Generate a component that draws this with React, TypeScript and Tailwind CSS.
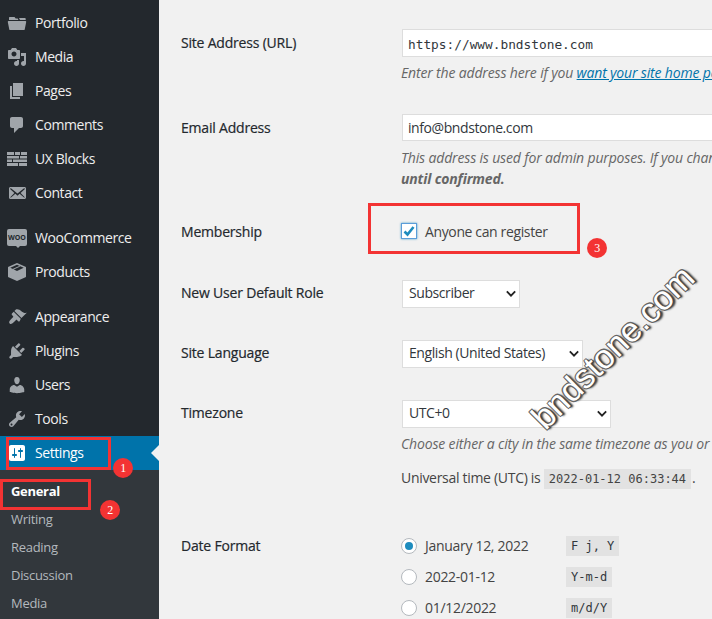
import React from "react";

const P: Record<string, string> = {
  media: "M13 11V4c0-.55-.45-1-1-1h-1.670L9 1H5L3.670 3H2c-.55 0-1 .45-1 1v7c0 .55.45 1 1 1h10c.55 0 1-.45 1-1zM7 4.500c1.380 0 2.500 1.120 2.500 2.500S8.380 9.500 7 9.500 4.500 8.380 4.500 7 5.620 4.500 7 4.500zM14 6h5v10.500c0 1.380-1.120 2.500-2.500 2.500S14 17.880 14 16.500s1.120-2.500 2.500-2.500c.17 0 .34.020.5.050V9h-3V6zm-4 8.050V13h2v3.500c0 1.380-1.120 2.500-2.500 2.500S7 17.880 7 16.500 8.120 14 9.500 14c.17 0 .34.020.5.050z",
  pages: "M6 15V2h10v13H6zm-1 1h8v2H3V5h2v11z",
  comments: "M5 2h9c1.100 0 2 .9 2 2v7c0 1.100-.9 2-2 2h-2l-5 5v-5H5c-1.100 0-2-.9-2-2V4c0-1.100.9-2 2-2z",
  email: "M19 14.500v-9c0-.83-.67-1.500-1.500-1.500H3.490c-.83 0-1.500.67-1.500 1.500v9c0 .83.67 1.500 1.500 1.500H17.500c.83 0 1.500-.67 1.500-1.500zm-1.310-9.110c.33.33.15.67-.03.84L13.590 9.960l3.910 4.070c.12.14.2.36.06.51-.13.16-.43.15-.55.050l-4.380-3.740-2.140 1.950-2.130-1.950-4.380 3.740c-.12.100-.42.110-.55-.050-.14-.15-.06-.37.06-.51l3.910-4.070-4.070-3.730c-.18-.17-.36-.51-.03-.84.33-.33.67-.17.95.070l6.240 5.040 6.250-5.040c.28-.24.62-.4.95-.07z",
  appearance: "M14.480 11.060L7.410 3.990l1.500-1.500c.5-.56 2.300-.47 3.510.32 1.210.8 1.430 1.280 2.910 2.100 1.180.64 2.450 1.260 4.450.85zm-.71.71L6.700 4.700 4.930 6.470c-.39.39-.39 1.020 0 1.410l1.060 1.060c.39.39.39 1.030 0 1.420-.6.600-1.430 1.310-2.210 2.090-1.790 1.800-2.040 3.040-1.100 4 .95.940 2.200.7 3.990-1.100.78-.78 1.480-1.610 2.090-2.200.39-.39 1.020-.39 1.410 0l1.060 1.060c.39.39 1.020.39 1.410 0z",
  plugins: "M13.110 4.360L9.870 7.600 8 5.730l3.240-3.240c.35-.34 1.050-.2 1.560.32.52.51.66 1.210.31 1.550zm-8 1.770l.91-1.120 9.010 9.010-1.190.84c-.71.71-2.630 1.160-3.820 1.160H6.140L4.900 17.260c-.59.59-1.540.59-2.120 0-.59-.58-.59-1.530 0-2.120l1.240-1.240v-3.880c0-1.130.4-3.180 1.090-3.890zm7.260 3.970l3.240-3.240c.34-.35 1.040-.21 1.550.31.52.51.66 1.210.31 1.550l-3.240 3.250z",
  users: "M10 9.250c-2.270 0-2.730-3.440-2.730-3.440C7 4.020 7.820 2 9.970 2c2.160 0 2.980 2.020 2.710 3.810 0 0-.41 3.440-2.680 3.440zm0 2.570L12.720 10c2.390 0 4.520 2.330 4.520 4.530v2.490s-3.650 1.130-7.240 1.130c-3.650 0-7.240-1.130-7.240-1.130v-2.490c0-2.250 1.940-4.480 4.470-4.480z",
  tools: "M16.680 9.770c-1.340 1.340-3.300 1.670-4.950.99l-5.410 6.520c-.99.99-2.590.99-3.580 0s-.99-2.590 0-3.570l6.520-5.420c-.68-1.650-.35-3.610.99-4.950 1.280-1.280 3.120-1.620 4.720-1.060l-2.890 2.890 2.820 2.820 2.860-2.870c.53 1.580.18 3.390-1.080 4.650zM3.810 16.210c.4.390 1.040.39 1.430 0 .4-.4.400-1.040 0-1.430-.39-.4-1.030-.4-1.430 0-.39.39-.39 1.030 0 1.430z",
  settings: "M18 16V4c0-1.100-.9-2-2-2H4c-1.100 0-2 .9-2 2v12c0 1.100.9 2 2 2h12c1.100 0 2-.9 2-2zM8 11h1c.55 0 1 .45 1 1s-.45 1-1 1H8v1.500c0 .28-.22.5-.5.5s-.5-.22-.5-.5V13H6c-.55 0-1-.45-1-1s.45-1 1-1h1V5.500c0-.28.22-.5.5-.5s.5.22.5.5V11zm5-2h-1c-.55 0-1-.45-1-1s.45-1 1-1h1V5.500c0-.28.22-.5.5-.5s.5.22.5.5V7h1c.55 0 1 .45 1 1s-.45 1-1 1h-1v5.500c0 .28-.22.5-.5.5s-.5-.22-.5-.5V9z",
  portfolio: "M2 8h16.500c.5 0 .8.4.7.9l-1.500 7.500c-.1.4-.4.6-.8.6H3.100c-.4 0-.7-.2-.8-.6L.8 8.900C.7 8.400 1 8 1.500 8zM2 7V4.700c0-.4.3-.7.7-.7h4.800l1.200 1.500h2l.8 1.500zM13 7l-1-2h6c.4 0 .7.3.7.7V7z",
  blocks: "M0 3h7v3H0zM8 3h5v3H8zM14 3h6v3h-6zM0 7h12v2.500H0zM13 7h7v2.500h-7zM0 10.500h5V13H0zM6 10.500h14V13H6zM0 14h11v3H0zM12 14h8v3h-8z",
  products: "M10 1l8.500 3.800c.3.100.5.4.5.8v8.800c0 .4-.2.7-.5.8L10 19l-8.500-3.800c-.3-.1-.5-.4-.5-.8V5.600c0-.4.2-.7.5-.8zM10 2.800L3.300 5.700 10 9l6.700-3.300zM12.200 3.900L5.600 7l1.100.5 6.600-3.100z",
};

function Icon({ name, color = "#a0a5aa" }: { name: string; color?: string }) {
  return (
    <svg viewBox="0 0 20 20" className="w-5 h-5 shrink-0" fill={color} fillRule="evenodd">
      <path d={P[name]} />
    </svg>
  );
}

function WooIcon() {
  return (
    <div className="relative w-5 h-[17px] mb-[2px] bg-[#a0a5aa] rounded-[2px] flex items-center justify-center shrink-0">
      <span className="text-[7px] font-bold leading-none tracking-[0px] text-[#23282d]">WOO</span>
      <div className="absolute left-[9px] -bottom-[2px] w-0 h-0 border-x-[2px] border-x-transparent border-t-[2px] border-t-[#a0a5aa]" />
    </div>
  );
}

function Item({ icon, label }: { icon: string; label: string }) {
  return (
    <div className="h-[34px] flex items-center pl-[7px] gap-2 text-[#eeeeee] tracking-[-0.42px]">
      {icon === "woo" ? <WooIcon /> : <Icon name={icon} />}
      <span className="mb-[2px]">{label}</span>
    </div>
  );
}

function Badge({ n, className }: { n: number; className: string }) {
  return (
    <div className={`absolute w-5 h-5 rounded-full bg-[#f33333] text-white text-[12px] leading-5 text-center font-['Liberation_Serif',serif] ${className}`}>
      {n}
    </div>
  );
}

function Select({ w, children }: { w: string; children: string }) {
  return (
    <div className={`relative h-7 ${w}`}>
      <select className="appearance-none w-full h-full bg-white border border-[#dddddd] pl-[6px] pb-[4px] text-[#32373c] text-[14px] tracking-[-0.42px] outline-none">
        <option>{children}</option>
      </select>
      <svg viewBox="0 0 12 8" className="absolute right-[4px] top-[10px] w-[10px] h-[7px]" fill="none" stroke="#222222" strokeWidth="2.200">
        <path d="M1 1.500l5 5 5-5" />
      </svg>
    </div>
  );
}

function Row({ label, mt, pt = "pt-1", children }: { label: string; mt: string; pt?: string; children: React.ReactNode }) {
  return (
    <div className={`flex ${mt}`}>
      <div className={`w-[221px] shrink-0 font-medium text-[#23282d] leading-5 tracking-[-0.2px] [-webkit-text-stroke:0.2px_#23282d] ${pt}`}>{label}</div>
      <div className="w-[500px] shrink-0">{children}</div>
    </div>
  );
}

const mono = "font-['DejaVu_Sans_Mono',monospace]";
const hint = "italic text-[#666666] leading-[21px] whitespace-nowrap -ml-px tracking-[-0.16px]";

function DateOpt({ label, code, checked, mt }: { label: string; code: string; checked?: boolean; mt?: string }) {
  return (
    <div className={`flex items-center h-5 ${mt ?? ""}`}>
      <div className="w-4 h-4 rounded-full bg-white border border-[#b4b9be] flex items-center justify-center shrink-0 -ml-px">
        {checked && <div className="w-2 h-2 rounded-full bg-[#1e8cbe]" />}
      </div>
      <span className="ml-2 w-[141px] text-[#444444] leading-5">{label}</span>
      <code className={`bg-[#e2e2e2] px-[5px] h-5 leading-5 text-[12px] tracking-normal text-[#32373c] ${mono}`}>{code}</code>
    </div>
  );
}

export default function App() {
  return (
    <div className="relative w-[712px] h-[619px] overflow-hidden flex bg-[#f1f1f1] text-[14px] font-['Open_Sans',sans-serif] tracking-[-0.3px]">
      <aside className="w-[159px] shrink-0 bg-[#23282d] flex flex-col pt-[6px]">
        <Item icon="portfolio" label="Portfolio" />
        <Item icon="media" label="Media" />
        <Item icon="pages" label="Pages" />
        <Item icon="comments" label="Comments" />
        <Item icon="blocks" label="UX Blocks" />
        <Item icon="email" label="Contact" />
        <div className="h-[11px]" />
        <Item icon="woo" label="WooCommerce" />
        <Item icon="products" label="Products" />
        <div className="h-[11px]" />
        <Item icon="appearance" label="Appearance" />
        <Item icon="plugins" label="Plugins" />
        <Item icon="users" label="Users" />
        <Item icon="tools" label="Tools" />
        <div className="relative h-[34px] flex items-center pl-[7px] gap-2 bg-[#0073aa] text-white tracking-[-0.42px]">
          <Icon name="settings" color="#ffffff" />
          <span className="mb-[2px]">Settings</span>
          <div className="absolute right-0 top-[9px] w-0 h-0 border-y-[8px] border-y-transparent border-r-[8px] border-r-[#f1f1f1]" />
        </div>
        <div className="flex-1 bg-[#32373c] pt-[7px] text-[13px] text-[#b4b9be]">
          <div className="h-7 leading-7 pl-[11px] font-bold text-white">General</div>
          <div className="h-7 leading-7 pl-[11px]">Writing</div>
          <div className="h-7 leading-7 pl-[11px]">Reading</div>
          <div className="h-7 leading-7 pl-[11px]">Discussion</div>
          <div className="h-7 leading-7 pl-[11px]">Media</div>
        </div>
      </aside>

      <main className="flex-1 min-w-0 pt-[29px] pl-[22px]">
        <Row label="Site Address (URL)" mt="mt-0">
          <div className={`h-7 w-[400px] bg-white border border-[#dddddd] pl-[5px] leading-[29px] text-[12.8px] tracking-normal text-[#32373c] ${mono}`}>
            https://www.bndstone.com
          </div>
          <p className={`${hint} mt-[5px]`}>
            Enter the address here if you <a className="text-[#0073aa] underline">want your site home page to be different</a>
          </p>
        </Row>
        <Row label="Email Address" mt="mt-[31px]">
          <div className="h-[27px] w-[400px] bg-white border border-[#dddddd] pl-[5px] leading-[25px] text-[#32373c] tracking-[-0.42px]">info@bndstone.com</div>
          <p className={`${hint} mt-[6px]`}>
            This address is used for admin purposes. If you change this, we will send you an email
            <br />
            <b>until confirmed.</b>
          </p>
        </Row>
        <Row label="Membership" mt="mt-[32px]" pt="pt-[1px]">
          <div className="flex items-center h-5 -ml-px">
            <div className="w-4 h-4 bg-white border border-[#5b9dd9] flex items-center justify-center shadow-[0_0_2px_rgba(30,140,190,0.8)]">
              <svg viewBox="0 0 14 14" className="w-[14px] h-[14px]" fill="none" stroke="#1e8cbe" strokeWidth="2.600">
                <path d="M2.500 7.500l3 3 6-7.500" />
              </svg>
            </div>
            <span className="ml-2 text-[#444444] tracking-[-0.37px]">Anyone can register</span>
          </div>
        </Row>
        <Row label="New User Default Role" mt="mt-[38px]" pt="pt-[3px]">
          <Select w="w-[118px]">Subscriber</Select>
        </Row>
        <Row label="Site Language" mt="mt-[32px]" pt="pt-[3px]">
          <Select w="w-[181px]">English (United States)</Select>
        </Row>
        <Row label="Timezone" mt="mt-[32px]" pt="pt-[3px]">
          <Select w="w-[209px]">UTC+0</Select>
          <p className={`${hint} mt-[5px]`}>Choose either a city in the same timezone as you or a UTC offset</p>
          <p className="mt-[14px] h-5 leading-5 text-[#444444] -ml-px whitespace-nowrap">
            Universal time (UTC) is{" "}
            <code className={`inline-block bg-[#e2e2e2] px-[5px] h-5 leading-5 text-[12px] tracking-normal ${mono}`}>2022-01-12 06:33:44</code>
            <span className="ml-[1px]">.</span>
          </p>
        </Row>
        <Row label="Date Format" mt="mt-[48px]" pt="pt-0">
          <DateOpt label="January 12, 2022" code="F j, Y" checked />
          <DateOpt label="2022-01-12" code="Y-m-d" mt="mt-[11px]" />
          <DateOpt label="01/12/2022" code="m/d/Y" mt="mt-[11px]" />
        </Row>
      </main>

      <div className="absolute left-[6px] top-[437px] w-[105px] h-[33px] border-[3px] border-[#f33333]" />
      <div className="absolute left-0 top-[479px] w-[91px] h-[31px] border-[3px] border-[#f33333]" />
      <div className="absolute left-[368px] top-[203px] w-[212px] h-[51px] border-[3px] border-[#f33333]" />
      <Badge n={1} className="left-[113px] top-[458px]" />
      <Badge n={2} className="left-[100px] top-[500px]" />
      <Badge n={3} className="left-[587px] top-[238px]" />

      <div className="absolute left-[496px] top-[325px] w-[233px] text-center -rotate-45 text-white text-[34px] leading-[44px] tracking-normal whitespace-nowrap font-['Liberation_Sans',sans-serif] [text-shadow:1px_1px_0_#444,-1px_-1px_0_#666,1px_-1px_0_#666,-1px_1px_0_#666,2px_2px_2px_#333]">
        bndstone.com
      </div>
    </div>
  );
}
